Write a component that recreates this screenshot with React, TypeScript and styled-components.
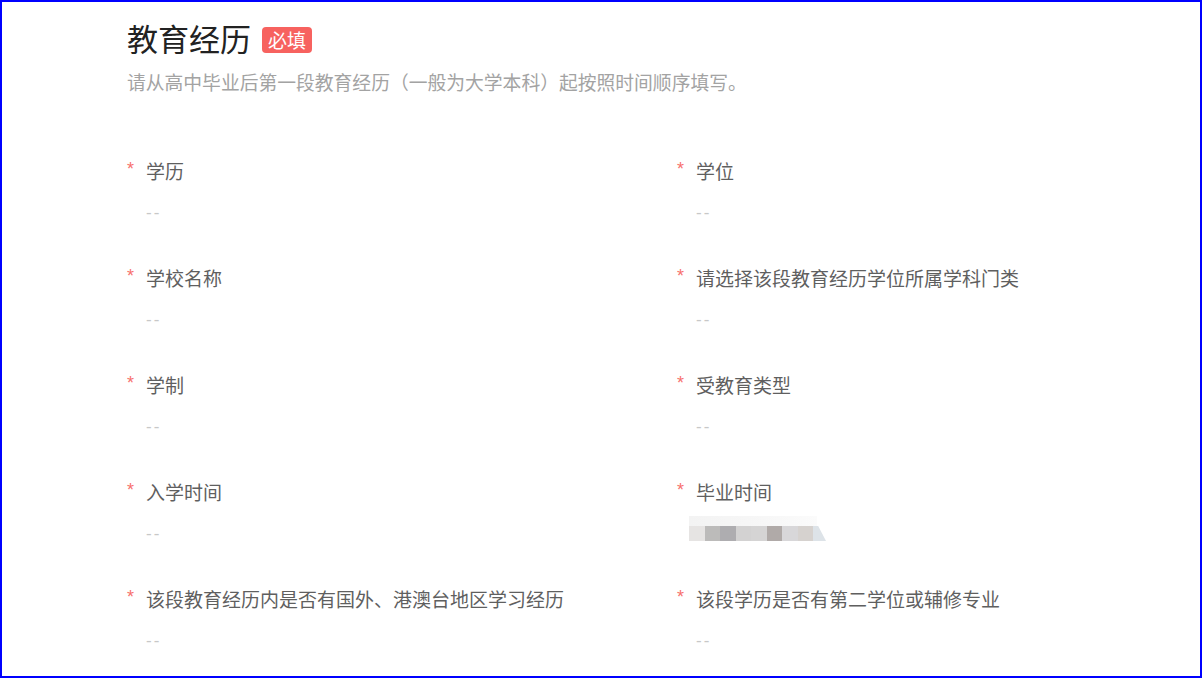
import React from 'react';
import styled, { createGlobalStyle } from 'styled-components';

interface Field {
  label: string,
  value?: string,
  blurred?: boolean,
}

const fields: Field[] = [
  { label: '学历' },
  { label: '学位' },
  { label: '学校名称' },
  { label: '请选择该段教育经历学位所属学科门类' },
  { label: '学制' },
  { label: '受教育类型' },
  { label: '入学时间' },
  { label: '毕业时间', blurred: true },
  { label: '该段教育经历内是否有国外、港澳台地区学习经历' },
  { label: '该段学历是否有第二学位或辅修专业' },
];

// pixel blocks of the masked date
const blurCells = ['#e6e4e3', '#bcbbba', '#aeadb0', '#d3d2d2', '#d5d4d4', '#b0aaa8', '#d8d7d9', '#d6d2cf'];

const BlurredValue: React.FC = () => (
  <StyledBlur>
    <StyledBlurTop />
    <StyledBlurRow>
      {blurCells.map((c, i) => (
        <StyledBlurCell key={i} $color={c} />
      ))}
      <StyledBlurTail />
    </StyledBlurRow>
  </StyledBlur>
);

const App: React.FC = () => (
  <>
    <GlobalStyle />
    <StyledFrame>
      <StyledSection>
        <StyledHeader>
          <StyledTitle>教育经历</StyledTitle>
          <StyledBadge>必填</StyledBadge>
        </StyledHeader>
        <StyledHint>请从高中毕业后第一段教育经历（一般为大学本科）起按照时间顺序填写。</StyledHint>
        <StyledGrid>
          {fields.map((f) => (
            <StyledField key={f.label}>
              <StyledLabel>
                <StyledStar>*</StyledStar>
                {f.label}
              </StyledLabel>
              {f.blurred ? <BlurredValue /> : <StyledValue>{f.value ?? '--'}</StyledValue>}
            </StyledField>
          ))}
        </StyledGrid>
      </StyledSection>
    </StyledFrame>
  </>
);

const GlobalStyle = createGlobalStyle`
  body {
    margin: 0;
    background: #fff;
    font-family: "Noto Sans CJK SC", "Noto Sans", sans-serif;
  }
`;

const StyledFrame = styled.div`
  width: 1202px;
  height: 678px;
  box-sizing: border-box;
  border: 2px solid #0000ff;
  overflow: hidden;
  background: #fff;
`;

const StyledSection = styled.div`
  padding: 16px 0 0 125px;
`;

const StyledHeader = styled.div`
  display: flex;
  align-items: center;
  height: 40px;
  gap: 11px;
`;

const StyledTitle = styled.h2`
  margin: 0;
  font-size: 31px;
  font-weight: 400;
  color: #222;
  line-height: 40px;
`;

const StyledBadge = styled.span`
  display: inline-flex;
  align-items: center;
  justify-content: center;
  height: 26px;
  padding: 0 6px;
  margin-top: 3px;
  border-radius: 4px;
  background: #f7625f;
  color: #fff;
  font-size: 19px;
`;

const StyledHint = styled.p`
  margin: 11px 0 0;
  font-size: 18.8px;
  line-height: 26px;
  color: #a3a3a3;
`;

const StyledGrid = styled.div`
  display: grid;
  grid-template-columns: 550px 550px;
  row-gap: 43px;
  margin-top: 62px;
`;

const StyledField = styled.div`
  display: flex;
  flex-direction: column;
  height: 64px;
`;

const StyledLabel = styled.div`
  display: flex;
  align-items: center;
  height: 26px;
  font-size: 19px;
  color: #5f5f5f;
`;

const StyledStar = styled.span`
  width: 19px;
  font-family: "Liberation Sans", sans-serif;
  font-size: 18px;
  color: #f7716d;
  position: relative;
  top: -1px;
`;

const StyledValue = styled.div`
  margin: 20px 0 0 19px;
  height: 20px;
  line-height: 20px;
  font-family: "Liberation Sans", sans-serif;
  font-size: 17px;
  letter-spacing: 2px;
  color: #c8c8c8;
`;

const StyledBlur = styled.div`
  margin: 12px 0 0 12px;
  display: flex;
  flex-direction: column;
  width: 137px;
  filter: blur(0.6px);
`;

const StyledBlurTop = styled.div`
  height: 10px;
  width: 128px;
  background: linear-gradient(90deg, #f3f3f3, #f7f7f7 60%, #fbfbfb);
`;

const StyledBlurRow = styled.div`
  display: flex;
  height: 15px;
`;

const StyledBlurCell = styled.div<{ $color: string }>`
  width: 15.5px;
  background: ${(p) => p.$color};
`;

const StyledBlurTail = styled.div`
  width: 13px;
  background: #dde3e8;
  clip-path: polygon(0 0, 40% 0, 100% 100%, 0 100%);
`;

export default App;
